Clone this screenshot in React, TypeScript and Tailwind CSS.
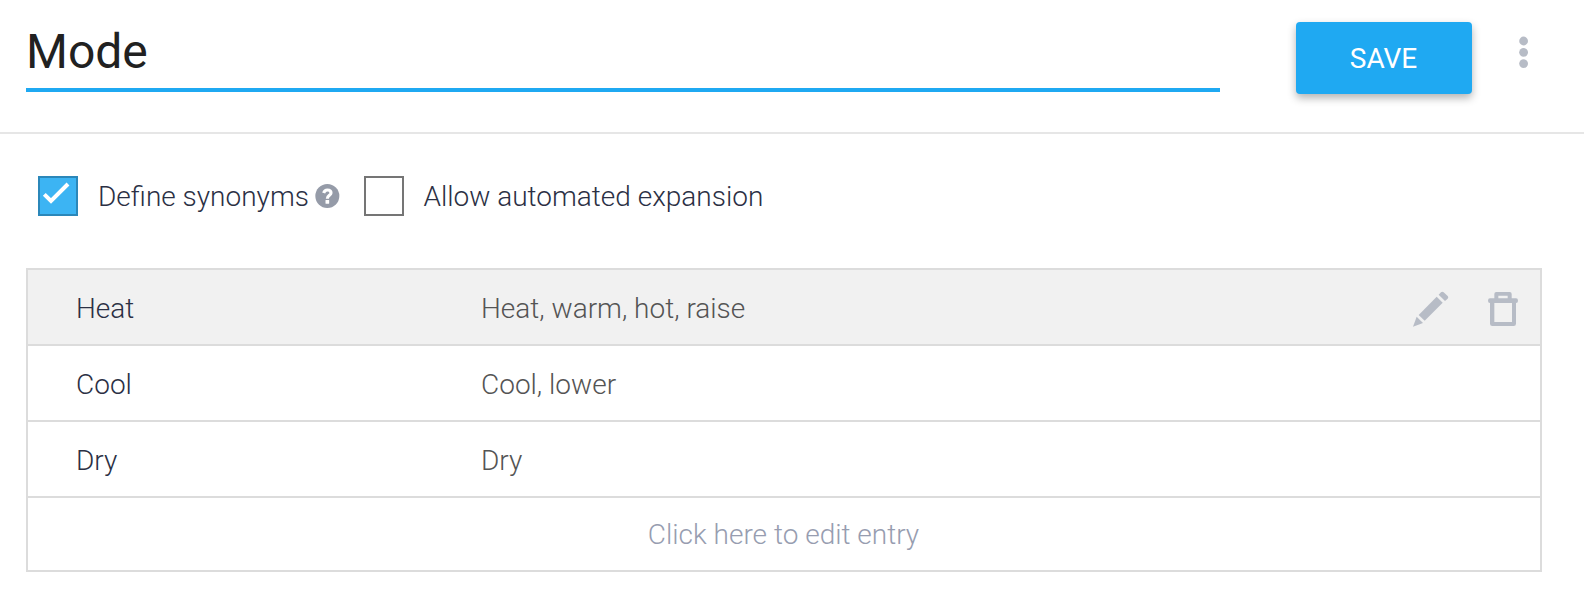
const rows = [
  { name: "Heat", synonyms: "Heat, warm, hot, raise", active: true },
  { name: "Cool", synonyms: "Cool, lower", active: false },
  { name: "Dry", synonyms: "Dry", active: false },
];

function HelpIcon() {
  return (
    <svg className="mt-2 ml-1.5" width="25" height="24" viewBox="9 12 75 72" fill="none">
      <circle cx="46" cy="48" r="36" fill="#959ba8" />
      <path d="M35 39Q38 30 46 30C53 30 57 34 57 39C57 46 46 46 46 56" stroke="white" strokeWidth="9.5" />
      <rect x="40.5" y="60" width="11" height="11" rx="1" fill="white" />
    </svg>
  );
}

function PencilIcon() {
  return (
    <svg width="40" height="40" viewBox="78 90 120 120" fill="#b7bcc6">
      <path d="M87 200L98 170L117 189Z" />
      <path d="M104 165L158 110L176 128L122 182Z" />
      <path d="M164 104L171 97Q175 93 179 97L191 108Q195 112 191 116L183 123Z" />
    </svg>
  );
}

function TrashIcon() {
  return (
    <svg width="34" height="40" viewBox="306 90 102 120" fill="#b7bcc6" fillRule="evenodd">
      <path d="M331 115V102Q331 96 337 96H377Q383 96 383 102V115H396Q402 115 402 122Q402 129 396 129V191Q396 198 389 198H325Q318 198 318 191V129Q312 129 312 122Q312 115 318 115ZM343 107V115H371V107ZM331 129V186H384V129Z" />
    </svg>
  );
}

export default function App() {
  return (
    <div className="h-[606px] w-[1584px] overflow-hidden bg-white font-['Roboto',sans-serif] text-[28px] leading-[36px] font-light text-[#2b3044]">
      <header className="flex h-[134px] items-start border-b-2 border-[#e6e6e6] pl-[26px]">
        <div className="flex h-[92px] w-[1194px] items-end border-b-4 border-[#1fa9f2] pb-2 text-[48px] leading-[56px] font-normal text-[#212121]">
          Mode
        </div>
        <button className="mt-[22px] ml-[76px] flex h-[72px] w-[176px] items-center justify-center rounded-[4px] bg-[#1fa9f2] pt-0.5 pr-px font-normal text-white shadow-[0_4px_8px_rgba(0,0,0,0.3)]">
          SAVE
        </button>
        <svg className="mt-9 ml-[46px]" width="12" height="34" viewBox="0 0 12 34" fill="#b7bcc6">
          <circle cx="5.6" cy="5" r="4.4" />
          <circle cx="5.6" cy="16.3" r="4.4" />
          <circle cx="5.6" cy="27.6" r="4.4" />
        </svg>
      </header>

      <div className="flex h-[134px] items-start pt-[42px] pl-[38px]">
        <div className="size-10 border-2 border-[#2b87b9] bg-[#3cb4f3]">
          <svg width="36" height="36" viewBox="0 0 36 36" fill="none" stroke="white" strokeWidth="4">
            <path d="M4.3 16.4L11 23L28 6" />
          </svg>
        </div>
        <span className="mt-[3px] ml-5">Define synonyms</span>
        <HelpIcon />
        <div className="ml-6 size-10 border-2 border-[#757575]" />
        <span className="mt-[3px] ml-[19.5px]">Allow automated expansion</span>
      </div>

      <main className="ml-[26px] w-[1516px] border-2 border-[#dcdcdc]">
        {rows.map((row) => (
          <div
            key={row.name}
            className={
              row.active
                ? "flex h-[76px] items-center border-b-2 border-[#dcdcdc] bg-[#f1f1f1] pt-1 pr-5 pl-12"
                : "flex h-[76px] items-center border-b-2 border-[#dcdcdc] pt-1 pr-5 pl-12"
            }
          >
            <span className="w-[405px]">{row.name}</span>
            <span className="flex-1 text-[#545454]">{row.synonyms}</span>
            {row.active && (
              <div className="mt-0.5 flex gap-9">
                <PencilIcon />
                <TrashIcon />
              </div>
            )}
          </div>
        ))}
        <div className="flex h-[72px] items-center justify-center pt-0.5 pr-px text-[#979db0]">
          Click here to edit entry
        </div>
      </main>
    </div>
  );
}
